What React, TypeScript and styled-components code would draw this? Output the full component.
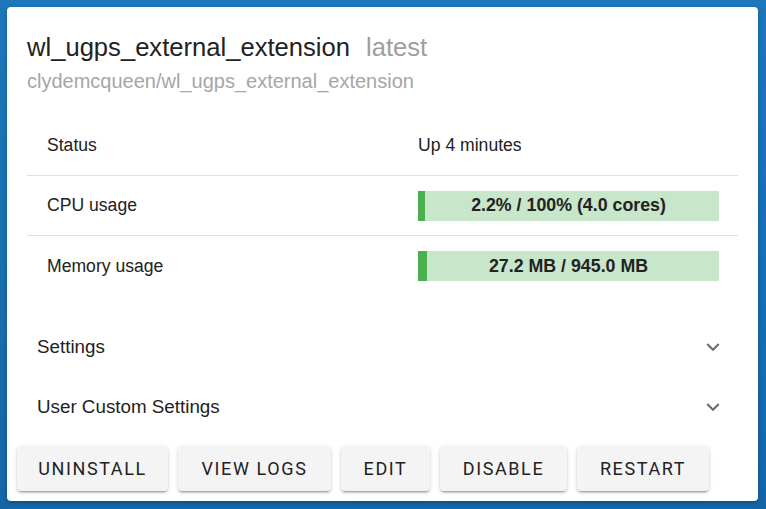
import styled, { createGlobalStyle } from "styled-components";

const GlobalStyle = createGlobalStyle`
  html, body {
    margin: 0;
    padding: 0;
    height: 100%;
  }
  body {
    background: linear-gradient(180deg, #1b78ba 0%, #1566a9 100%);
    font-family: "Liberation Sans", Arial, sans-serif;
  }
`;

const Page = styled.div`
  padding: 7px 8px 8px 7px;
  box-sizing: border-box;
  height: 509px;
`;

const Card = styled.div`
  background: #fff;
  border-radius: 4px;
  height: 494px;
  box-sizing: border-box;
  padding: 24px 20px 0 20px;
  display: flex;
  flex-direction: column;
  box-shadow: 0 2px 4px rgba(0, 0, 0, 0.25);
`;

const TitleRow = styled.div`
  display: flex;
  align-items: baseline;
  gap: 16px;
  font-size: 25.6px;
  line-height: 32px;
  color: #222;
`;

const Tag = styled.span`
  color: #9e9e9e;
`;

const SubTitle = styled.div`
  font-size: 20px;
  line-height: 26px;
  color: #a6a6a6;
  margin-top: 5px;
`;

const Table = styled.div`
  margin-top: 22px;
  margin-bottom: 21px;
  display: flex;
  flex-direction: column;
`;

const Row = styled.div<{ $last?: boolean }>`
  display: grid;
  grid-template-columns: 371px 1fr;
  align-items: center;
  height: 60px;
  box-sizing: border-box;
  border-bottom: ${(p) => (p.$last ? "none" : "1px solid #e0e0e0")};
  padding-left: 20px;
  font-size: 17.6px;
  color: #222;
`;

const Bar = styled.div`
  position: relative;
  width: 301px;
  height: 30px;
  background: #c8e6c9;
  display: flex;
  align-items: center;
  justify-content: center;
  font-weight: bold;
  font-size: 17.8px;
  color: #222;
`;

const Fill = styled.div`
  position: absolute;
  left: 0;
  top: 0;
  bottom: 0;
  background: #4caf50;
`;

const BarLabel = styled.span`
  position: relative;
`;

const Accordion = styled.div`
  display: flex;
  align-items: center;
  justify-content: space-between;
  height: 60px;
  padding: 0 12px 0 10px;
  font-size: 18.8px;
  color: #222;
`;

const Actions = styled.div`
  display: flex;
  gap: 10px;
  margin: 9px -10px 0 -10px;
`;

const Button = styled.button<{ $w: number }>`
  font-family: Roboto, "Liberation Sans", sans-serif;
  font-size: 18px;
  font-weight: 400;
  letter-spacing: 1.6px;
  text-transform: uppercase;
  color: #222;
  background: #f4f4f4;
  border: none;
  border-radius: 4px;
  width: ${(p) => p.$w}px;
  height: 45px;
  padding: 0;
  box-shadow: 0 3px 1px -2px rgba(0, 0, 0, 0.2), 0 2px 2px 0 rgba(0, 0, 0, 0.14),
    0 1px 5px 0 rgba(0, 0, 0, 0.12);
`;

const Chevron = () => (
  <svg width="26" height="26" viewBox="0 0 24 24" fill="#6e6e6e">
    <path d="M16.59 8.59 12 13.17 7.41 8.59 6 10l6 6 6-6z" />
  </svg>
);

const App = () => {
  const bars = [
    { label: "CPU usage", text: "2.2% / 100% (4.0 cores)", pct: 2.2 },
    { label: "Memory usage", text: "27.2 MB / 945.0 MB", pct: (27.2 / 945) * 100 },
  ];
  const actions = [
    { label: "Uninstall", w: 151 },
    { label: "View logs", w: 153 },
    { label: "Edit", w: 89 },
    { label: "Disable", w: 127 },
    { label: "Restart", w: 132 },
  ];

  return (
    <Page>
      <GlobalStyle />
      <Card>
        <TitleRow>
          <span>wl_ugps_external_extension</span>
          <Tag>latest</Tag>
        </TitleRow>
        <SubTitle>clydemcqueen/wl_ugps_external_extension</SubTitle>
        <Table>
          <Row>
            <span>Status</span>
            <span>Up 4 minutes</span>
          </Row>
          {bars.map((b, i) => (
            <Row key={b.label} $last={i === bars.length - 1}>
              <span>{b.label}</span>
              <Bar>
                <Fill style={{ width: `${Math.max(b.pct, 2.3)}%` }} />
                <BarLabel>{b.text}</BarLabel>
              </Bar>
            </Row>
          ))}
        </Table>
        <Accordion>
          <span>Settings</span>
          <Chevron />
        </Accordion>
        <Accordion>
          <span>User Custom Settings</span>
          <Chevron />
        </Accordion>
        <Actions>
          {actions.map((a) => (
            <Button key={a.label} $w={a.w}>
              {a.label}
            </Button>
          ))}
        </Actions>
      </Card>
    </Page>
  );
};

export default App;
